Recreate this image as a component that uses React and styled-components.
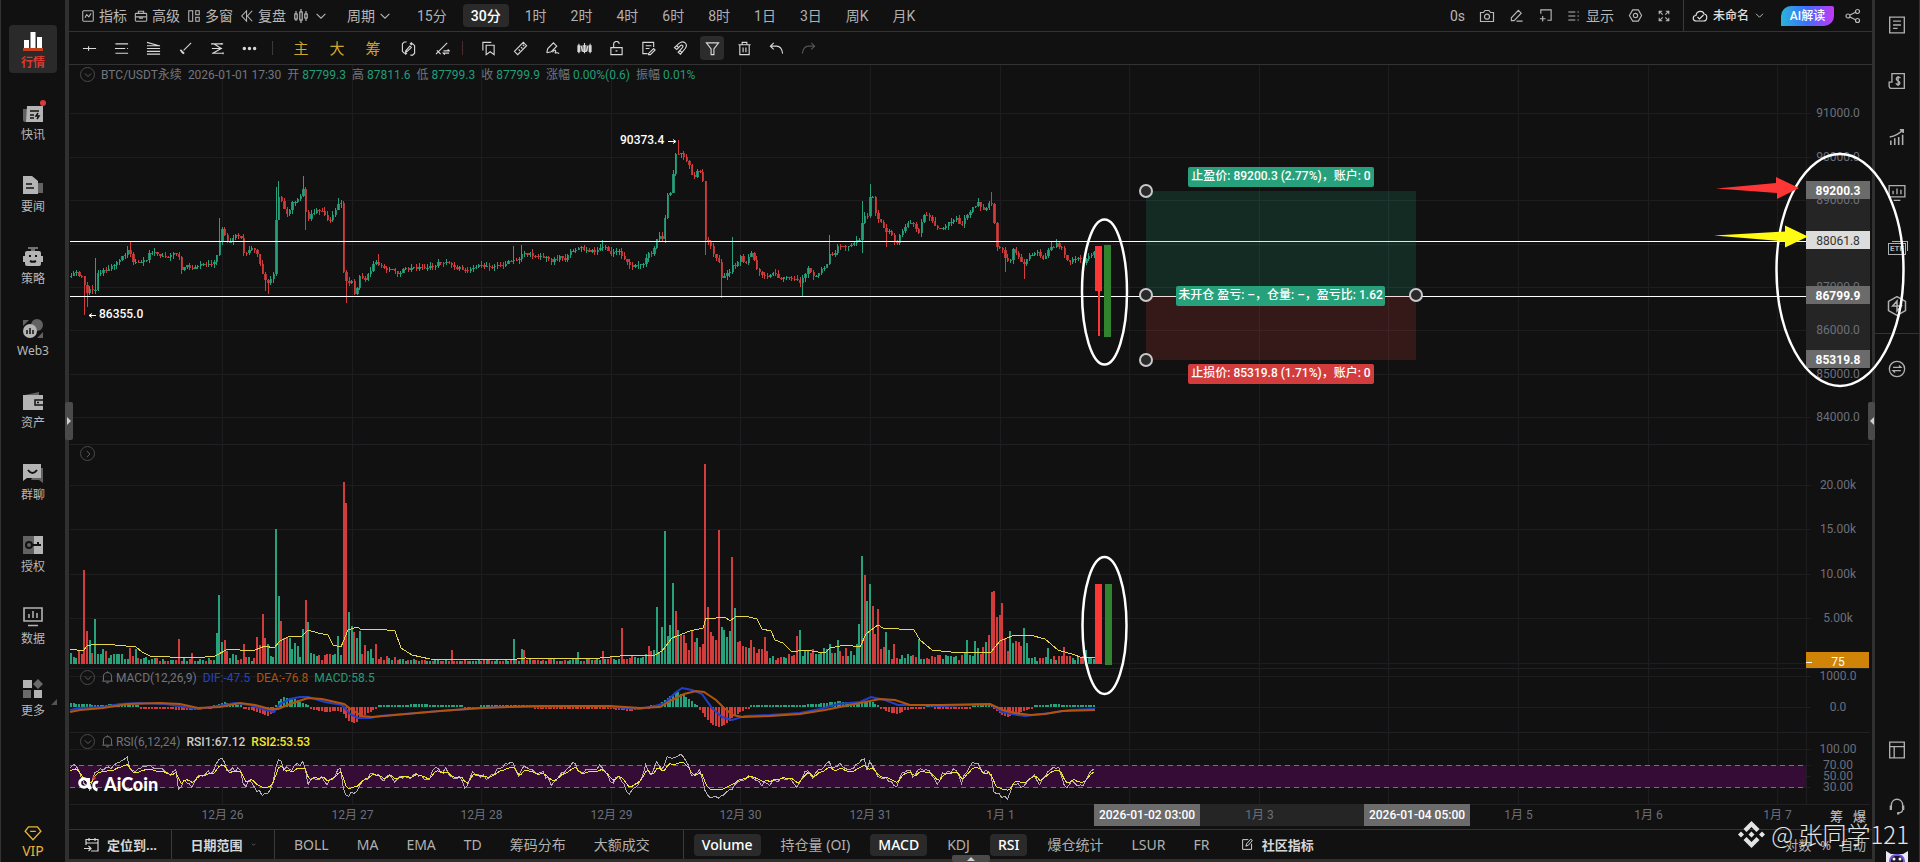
import React from 'react';
import styled, { createGlobalStyle } from 'styled-components';

/**
 * Icons, drawn on a 16px grid
 */

const paths = {
  stats: <><rect x="2" y="2" width="12" height="12" rx="1" /><path d="M4.5 10l2-3.5 2.500 2.500 2.500-4" /></>,
  bag: <><rect x="1.5" y="5" width="13" height="9" rx="1" /><path d="M5 5V2.5h6V5M1.5 9h13M6.5 9v1.5h3V9" /></>,
  windows: <><rect x="2" y="2" width="4.5" height="12" /><rect x="10" y="2" width="4" height="4.5" /><rect x="10" y="9.5" width="4" height="4.5" /></>,
  rewind: <path d="M7.5 2L2 8l5.5 6zM14 2L8.5 8l5.5 6" />,
  candles: <><path d="M3 3v10M8 1v14M13 3v10" /><rect x="1.8" y="6" width="2.4" height="5" fill="#111" /><rect x="6.8" y="4" width="2.4" height="8" fill="#111" /><rect x="11.8" y="6" width="2.4" height="4" fill="#111" /></>,
  down: <path d="M3 5.5l5 5 5-5" />,
  right: <path d="M6 3l5 5-5 5" />,
  camera: <><path d="M1.5 4.5h3l1.5-2h4l1.5 2h3v9h-13z" /><circle cx="8" cy="8.7" r="2.5" /></>,
  pencil: <path d="M2.5 13.5v-3l7.5-8 3 3-7.5 8zM8 14h6.5" />,
  addBox: <path d="M3 6V2h11v11h-4M2 11.5h6M5 8.5v6" />,
  list: <><path d="M1.5 3.5h8M1.5 8h8M1.5 12.5h8" /><path d="M12 3.5h2M12 8h2M12 12.5h2" strokeDasharray="1.5 1" /></>,
  hexagon: <><path d="M5 2h6l3.5 6L11 14H5L1.5 8z" /><circle cx="8" cy="8" r="2.3" /></>,
  expand: <path d="M2.5 6V2.5H6M2.5 2.5l4 4M10 2.5h3.5V6M13.5 2.5l-4 4M2.5 10v3.5H6M2.5 13.5l4-4M13.5 10v3.5H10M13.5 13.5l-4-4" />,
  cloud: <><path d="M4.5 13C0 13 .5 7.5 4 7.5c.5-5 7-5.5 8-1.5 4 .5 3.5 7-.5 7z" /><path d="M5.5 9l2 2 4-4" /></>,
  share: <><circle cx="3" cy="8" r="2" /><circle cx="12.5" cy="3.5" r="2" /><circle cx="12.5" cy="12.5" r="2" /><path d="M5 7l5.5-2.7M5 9l5.5 2.7" /></>,
  cross: <path d="M1 8h14M7 5.5v5" />,
  lines: <path d="M2 3h13M1 8h11M2 13h13M1 3h.5M14 8h1M1 13h.5" />,
  fan: <path d="M1 1.5l13 3.5M1 5h14M1 8h14M1 11h14M1 14h14" />,
  brush: <><path d="M14 2L6 10" /><path d="M2.5 9.5l4 4M4 11.5l1.5 1.5" strokeWidth="1.8" /></>,
  pattern: <path d="M2 3h12M2 8h11M2 13h12M4 3l8 5M12 8l-9 5M2 2v2M14 12v2M12 2v2" />,
  dots: <><circle cx="2.5" cy="8" r="1.2" fill="currentColor" /><circle cx="8" cy="8" r="1.2" fill="currentColor" /><circle cx="13.5" cy="8" r="1.2" fill="currentColor" /></>,
  cycle: <><path d="M6 1H3.5L1.5 3v8l2 2H6M4.5 14.5L6 13l-1.5-1.5M10 3h2.5l2 2v8l-2 2H10M11.5 1.5L10 3l1.5 1.5" /><path d="M5 10.5l4.5-5L11 7l-4.500 4H5z" /></>,
  lineSwap: <><path d="M1 14L13 2M2 10l4 4" /><path d="M9 10.5h6l-1.5-1.5M15 13H9l1.5 1.5" strokeWidth="1.4" /></>,
  bookmark: <><path d="M5.5 4.5H14v10l-4.2-3-4.3 3z" /><path d="M2 10V1.5h9" /></>,
  ruler: <path d="M1.5 11L11 1.5 14.5 5 5 14.5zM6 9l1.5 1.5M8.5 6.5L10 8M10.5 4L12 5.500" />,
  penWave: <path d="M2 12l1-4 6-6 3.5 3.5-6 6-4 1zM8 12c3-4 4-2 3 0s2-1 4 1.5" />,
  candleRow: <path d="M2 3v10M8 2v11M14 3v10M1 5h2v6H1zM6.5 5h3v6h-3zM13 5h2v6h-2zM4.5 5l1 6M11.5 5l-1 6" />,
  lock: <path d="M2 7h12v7.5H2zM5 7V4a3 3 0 0 1 6-1M7 10.5h2" />,
  note: <path d="M13.5 6.5v-5H2v12h5M5 5h6M5 8h4M8 13.5L13.5 8 15 9.5l-5 5H8z" />,
  magnet: <path d="M1.500 7l5-4.500c5-4 10 1 6.500 5.500L8 14l-2.500-2 4.500-5c1.500-2-.5-3.500-2-2L4 9zM4 5l2.500 2.500M7 10l2.500 2" />,
  filter: <path d="M1.5 2h13l-5 6.500v6h-3v-6z" />,
  trash: <path d="M3 4v10.5h10V4M1.5 4h13M5.5 4V1.5h5V4M6.5 7v5M9.5 7v5" />,
  undo: <path d="M5 2L1.5 5.5 5 9M2 5.5h6c4 0 6 3.5 6.5 8" />,
  redo: <path d="M11 2l3.5 3.5L11 9M14 5.5H8c-4 0-6 3.500-6.500 8" />,
  bell: <path d="M1.5 12.5h13M3 12V7a5 5 0 0 1 10 0v5M6.5 14.5h3M8 2V.5" />,
  calendar: <path d="M3 8V2.5h12V14H8M3 6h12M6 1v3M12 1v3M1 11.5h7M5.5 9L8 11.500 5.500 14" />,
  editBox: <path d="M9 2H2v12h11V7M6 10l1-3 5-5.5L14 3l-5 6z" />,
  doc: <path d="M1.5 1h13v14h-13zM4.5 4.5h7M4.5 8h7M4.5 11h4" />,
  bill: <><path d="M3.5 1.5h11v13H3a2 2 0 0 1-2-2V9h2.5z" /><path d="M11 5.5C10 4 7 4.500 7.500 6.500S11 8 10.500 10 7.500 11.500 7 10M9 3.5v9" /></>,
  growth: <path d="M2.5 15v-4M6 15V9M9.5 15V8M13 15V6M1.5 8C7 7 10 5 13.500 1.500M10.500 1.500h3v3" strokeWidth="1.4" />,
  board: <path d="M1 1.5h14v10H1zM4.5 9V6M8 9V4M11.5 9V5M5 14.5h6" />,
  hexTrade: <path d="M8 .5l6.800 3.800v7.400L8 15.500l-6.800-3.800V4.300zM8 4L4.500 8H8v4l3.500-4H8z" />,
  swap: <><circle cx="8" cy="8" r="6.8" /><path d="M4.5 6.5h7L9.800 4.800M11.500 9.500h-7l1.700 1.700" /></>,
  layout: <path d="M1.5 1h13v14h-13zM1.5 5h13M5.5 5v10" />,
  headset: <><path d="M3 10V7a5 5 0 0 1 10 0v3M13 11c0 2-2 3-4 3" /><path d="M2.5 7.5v4M13.5 7.5v4M8 14.5h2" strokeWidth="2" /></>,
  diamond: <path d="M4 2.5h8l3 4L8 14 1 6.500zM5.500 6.500h5" />
};

const Svg = styled.svg`
  flex: none;
  display: block;
  width: ${p => p.$size || 16}px;
  height: ${p => p.$size || 16}px;
  fill: none;
  stroke: currentColor;
`;

const Icon = ({ name, size, stroke = 1.2 }) => (
  <Svg viewBox="0 0 16 16" $size={size} strokeWidth={stroke} aria-hidden="true">
    {paths[name]}
  </Svg>
);

const menuIcons = {
  行情: <path d="M1 9h5v8H1zM7.5 1h5v16h-5zM14 6h5v11h-5z" />,
  快讯: <><path d="M0 6h4v13H2a2 2 0 0 1-2-2z" opacity=".5" /><path d="M4 3h16v16H3z" /><path d="M7 8h9M7 12h4M7 15h4M15 10l-2 3h3l-2 3" stroke="#111" strokeWidth="1.5" fill="none" /></>,
  要闻: <><path d="M13 8h7v10h-7z" opacity=".5" /><path d="M0 1h9l6 5v13H0z" /><path d="M3 9h6M3 13h8" stroke="#111" strokeWidth="1.5" /></>,
  策略: <><path d="M5 0h10v2h-3v2H8V2H5z" opacity=".6" /><rect x="2" y="4" width="16" height="15" rx="2" /><path d="M0 9h3v6H0zM17 9h3v6h-3z" /><path d="M6 9h2M12 9h2M7 14c2 1 4 1 6 0" stroke="#111" strokeWidth="2" fill="none" /></>,
  Web3: <><path d="M0 1h6L0 7zM20 13v6h-6z" opacity=".5" /><circle cx="14" cy="6" r="6" opacity=".5" /><circle cx="7" cy="12" r="7" /><path d="M4 15v-4M7 15V9M10 15v-4" stroke="#111" strokeWidth="1.5" /></>,
  资产: <><path d="M2 4l14-3v4H2z" opacity=".5" /><path d="M0 4h20v15H0z" /><path d="M20 9h-8v5h8M14 11.5h2" stroke="#111" strokeWidth="1.5" fill="none" /></>,
  群聊: <><path d="M14 5h6v15l-4-3H8z" opacity=".5" /><path d="M0 1h18v14H4l-4 3z" /><path d="M5 7c3 4 6 4 9 0" stroke="#111" strokeWidth="2" fill="none" /></>,
  授权: <><path d="M0 1h11v18H0z" opacity=".5" /><path d="M11 1h9v18h-9z" /><circle cx="6" cy="10" r="3" fill="none" stroke="#111" strokeWidth="2" /><path d="M9 10h9M15 10V7" stroke="#111" strokeWidth="2" /></>,
  数据: <><path d="M1 1h18v13H1z" fill="none" stroke="currentColor" strokeWidth="1.6" /><path d="M6 11V7M10 11V4M14 11V6M5 18.5h10" stroke="currentColor" strokeWidth="1.5" /></>,
  更多: <><path d="M0 1h9v8H0zM11 11h8v8h-8z" /><path d="M15 0l5 5-5 5-5-5zM0 11h8v8H0z" opacity=".55" /></>
};

/**
 * Layout
 */

const GlobalStyle = createGlobalStyle`
  * { box-sizing: border-box; }
  body {
    margin: 0;
    background: #111;
    color: #b8b8b8;
    font: 14px/20px Roboto, "Noto Sans CJK SC", sans-serif;
  }
  button { font: inherit; color: inherit; background: none; border: 0; padding: 0; margin: 0; }
`;

const Page = styled.div`
  position: relative;
  display: grid;
  grid-template-columns: 69px minmax(0, 1fr) 48px;
  height: 100vh;
  overflow: hidden;
`;

const SideBar = styled.nav`
  display: flex;
  flex-direction: column;
  align-items: center;
  gap: 24px;
  padding-top: 25px;
  border-left: 1px solid #333;
  border-right: 4px solid #303030;
  overflow: hidden;
`;

const MenuButton = styled.button`
  flex: none;
  position: relative;
  display: flex;
  flex-direction: column;
  align-items: center;
  width: 48px;
  height: 48px;
  padding-top: 6px;
  gap: 3px;
  border-radius: 4px;
  font: ${p => (p.$active ? 700 : 400)} 12px/18px "Noto Sans", "Noto Sans CJK SC", sans-serif;
  color: ${p => (p.$active ? '#d63a31' : '#b8b8b8')};
  background: ${p => (p.$active ? '#2a2a2a' : 'transparent')};
  svg { flex: none; color: ${p => (p.$active ? '#fff' : '#b4b4b4')}; fill: currentColor; }
`;

const RedDot = styled.span`
  position: absolute;
  top: 3px;
  right: 11px;
  width: 6px;
  height: 6px;
  border-radius: 50%;
  background: #d63a3a;
`;

const Corner = styled.span`
  position: absolute;
  right: 0;
  bottom: 16px;
  border: 3px solid transparent;
  border-right-color: #555;
  border-bottom-color: #555;
`;

const VipButton = styled(MenuButton)`
  height: 42px;
  margin-top: auto;
  padding-top: 4px;
  gap: 0;
  color: #e3b53a;
  font-size: 14px;
  svg { color: #e3b53a; fill: none; }
`;

const Main = styled.main`
  display: flex;
  flex-direction: column;
  min-width: 0;
  border-bottom: 3px solid #303030;
`;

const TopBar = styled.header`
  flex: none;
  display: flex;
  align-items: center;
  height: 32px;
  padding: 0 11px 0 12px;
  border-bottom: 1px solid #333;
  white-space: nowrap;
`;

const Group = styled.div`
  display: flex;
  align-items: center;
  gap: ${p => p.$gap || 8}px;
  margin-left: ${p => (p.$end ? 'auto' : `${p.$before || 0}px`)};
`;

const TextButton = styled.button`
  display: flex;
  align-items: center;
  gap: ${p => p.$gap || 5}px;
`;

const Tab = styled.button`
  height: ${p => p.$height || 23}px;
  padding: 0 8px;
  border-radius: 4px;
  color: ${p => (p.$active ? '#fff' : '#b0b0b0')};
  font-weight: ${p => (p.$active ? 500 : 400)};
  background: ${p => (p.$active ? '#2a2a2a' : 'transparent')};
`;

const Divider = styled.span`
  flex: none;
  width: 1px;
  height: ${p => p.$height}px;
  margin: 0 ${p => p.$after || 0}px 0 ${p => p.$before || 0}px;
  background: ${p => p.$color || '#3a3a3a'};
`;

const NameButton = styled(TextButton)`
  font-size: 12px;
  font-weight: 500;
  color: #e0e0e0;
`;

const AiButton = styled.button`
  width: 53px;
  height: 20px;
  margin-left: 5px;
  border-radius: 10px 2px 10px 0;
  font: 500 12px/20px Roboto, "Noto Sans CJK SC", sans-serif;
  color: #fff;
  background: linear-gradient(90deg, #29b5d8, #3f6dff 50%, #c438f3);
`;

const DrawBar = styled.div`
  flex: none;
  display: flex;
  align-items: center;
  height: 33px;
  padding-left: 4px;
  border-bottom: 1px solid #333;
  color: #d8d8d8;
`;

const ToolBox = styled.div`
  width: ${p => p.$width || 32}px;
  display: flex;
  justify-content: center;
`;

const ToolButton = styled.button`
  display: grid;
  place-items: center;
  width: 24px;
  height: 24px;
  border-radius: 4px;
  color: ${p => p.$color || 'inherit'};
  font-size: 16px;
  background: ${p => (p.$active ? '#2c2c2c' : 'transparent')};
`;

const MarkButton = styled(ToolButton)`
  padding-top: 2px;
  font-size: 15px;
`;

const ChartArea = styled.section`
  position: relative;
  flex: 1;
  min-height: 0;
`;

const ChartSvg = styled.svg`
  display: block;
  width: 100%;
  height: 100%;
  font: 12px Roboto, "Noto Sans CJK SC", sans-serif;
`;

const Legends = styled.div`
  position: absolute;
  inset: 0;
  display: grid;
  grid-template-rows: 379fr 224fr 64fr 97fr;
`;

const Legend = styled.div`
  display: flex;
  align-items: center;
  gap: 6px;
  height: 19px;
  padding-left: 11px;
  font-size: 12px;
  color: #72757d;
  white-space: nowrap;
`;

const Fold = styled.button`
  display: grid;
  place-items: center;
  width: 15px;
  height: 15px;
  border: 1px solid #4a4a4a;
  border-radius: 50%;
  color: #777;
`;

const Value = styled.span`
  color: ${p => p.$color || '#239d78'};
  font-weight: ${p => (p.$strong ? 500 : 400)};
`;

const Named = styled.span`
  display: flex;
  align-items: center;
  gap: 2px;
`;

const AxisTools = styled.div`
  position: absolute;
  right: 6px;
  bottom: 2px;
  display: flex;
  gap: 10px;
  font-size: 13px;
  font-weight: 500;
`;

const Brand = styled.div`
  position: absolute;
  left: 9px;
  bottom: 35px;
  display: flex;
  align-items: center;
  gap: 5px;
  color: #fff;
  font: 900 18px/20px Lato, sans-serif;
`;

const BottomBar = styled.footer`
  flex: none;
  display: flex;
  align-items: center;
  height: 30px;
  padding-right: 6px;
  border-top: 1px solid #333;
  font-family: "Noto Sans", "Noto Sans CJK SC", sans-serif;
  white-space: nowrap;
`;

const RangeButton = styled.button`
  display: flex;
  align-items: center;
  justify-content: center;
  gap: 8px;
  width: ${p => p.$width}px;
  font-size: 13px;
  font-weight: 700;
  color: #d6d6d6;
`;

const AxisMode = styled.div`
  display: flex;
  gap: 9px;
  margin-left: auto;
  font-size: 13px;
`;

const RightBar = styled.aside`
  display: flex;
  flex-direction: column;
  justify-content: space-between;
  border-left: 3px solid #303030;
  border-right: 1px solid #333;
  color: #b0b0b0;
  overflow: hidden;
`;

const Rail = styled.div`
  flex: none;
  display: flex;
  flex-direction: column;
  align-items: center;
  gap: 38px;
  padding-top: ${p => p.$top || 0}px;
`;

const RailButton = styled.button`
  flex: none;
  display: grid;
  place-items: center;
  width: 20px;
  height: 18px;
`;

const EtfBadge = styled.span`
  border: 1px solid #b0b0b0;
  box-shadow: 2px -2px 0 -1px #111, 3px -3px 0 -1px #b0b0b0;
  padding: 0 1px;
  font-size: 8px;
  line-height: 10px;
  font-weight: 700;
`;

const RailLine = styled.hr`
  flex: none;
  width: 100%;
  height: 1px;
  margin: -19px 0 -12px;
  border: 0;
  background: #333;
`;

const Avatar = styled.svg`
  flex: none;
  width: 24px;
  height: 12px;
  margin-top: -3px;
`;

const handlePlaces = {
  left: 'left: 65px; top: 402px; width: 8px; height: 38px;',
  right: 'right: 45px; top: 402px; width: 7px; height: 38px;',
  bottom: 'left: 952px; bottom: 0; width: 38px; height: 7px;'
};

const Handle = styled.button`
  position: absolute;
  z-index: 1;
  display: grid;
  place-items: center;
  color: #d0d0d0;
  background: #4a4a4a;
  border-radius: 2px;
  ${p => handlePlaces[p.$side]}
`;

const Marks = styled.svg`
  position: absolute;
  inset: 0;
  width: 100%;
  height: 100%;
  pointer-events: none;
`;

const Signature = styled.div`
  position: absolute;
  right: 11px;
  bottom: 10px;
  display: flex;
  align-items: center;
  gap: 6px;
  font: 300 24px/36px "Noto Sans CJK SC", sans-serif;
  color: #e4e4e4;
  pointer-events: none;
`;

/**
 * Chart data: key points, filled in to one candle every half hour
 */

const GREEN = '#26a17b';
const RED = '#d23c3c';
const STEP = 2.7;
const COUNT = 380;

const priceKeys = [70,278,74,270,78,276,82,277,85,289,88,295,90,288,92,291,95,290,97,272,102,272,108,268,114,264,120,259,126,252,129,246,131,262,137,263,146,261,149,253,153,250,158,256,166,257,172,253,178,253,180,269,186,266,193,268,200,265,208,265,214,262,218,250,219,240,222,228,225,238,228,245,232,240,237,234,241,240,244,258,250,248,256,252,260,266,264,280,268,285,272,276,275,270,276,200,280,194,282,208,288,215,291,204,296,202,301,195,304,184,306,225,310,213,316,211,322,210,328,221,334,214,338,204,342,203,343,270,347,287,351,280,354,293,356,296,358,275,365,279,370,271,374,263,380,266,388,270,392,267,396,274,402,270,420,267,432,267,440,262,450,263,456,268,468,270,476,266,500,266,510,261,518,260,522,252,526,254,540,256,552,261,560,256,565,259,572,250,580,248,590,252,600,248,603,246,611,254,618,250,626,262,632,266,642,265,648,252,650,258,654,246,659,234,661,245,664,225,666,196,670,194,672,181,674,154,679,154,682,155,686,160,690,168,693,179,698,168,702,180,704,190,705,240,710,245,714,256,719,262,721,277,726,275,730,272,733,262,736,268,739,253,744,265,748,258,751,252,755,266,762,274,768,279,772,272,778,278,784,276,790,280,796,278,799,284,803,278,808,268,814,278,820,270,826,268,828,255,834,255,838,244,846,248,850,246,856,240,860,238,863,208,866,225,870,193,872,196,875,213,879,220,884,230,890,232,896,246,900,234,906,224,912,222,918,234,922,216,930,216,935,226,942,229,948,223,956,217,960,226,966,215,972,208,978,202,984,211,988,202,992,204,994,225,996,246,1002,250,1006,262,1010,262,1012,247,1018,257,1024,265,1028,256,1036,251,1042,260,1048,250,1056,244,1062,250,1068,262,1076,257,1084,262,1090,254,1096,251];
const wickKeys = [85,315,87,307,96,258,129,242,219,218,264,291,268,294,276,187,279,181,303,176,306,230,338,198,346,303,377,254,514,246,522,245,603,240,679,140,706,255,720,298,733,237,801,296,828,235,861,253,870,184,862,201,887,247,990,192,1004,272,1024,279,1050,242];

const volumeKeys = [70,10,90,14,110,10,125,8,135,12,145,6,170,4,215,5,225,12,240,6,255,6,262,20,275,12,290,22,300,12,320,8,330,9,345,12,360,20,370,10,385,6,400,6,420,3,500,4,560,4,590,5,620,6,650,10,665,20,690,20,705,20,725,24,745,16,765,12,775,4,800,12,830,14,850,14,875,25,885,12,900,8,930,8,960,8,980,14,1000,30,1020,16,1035,6,1060,7,1096,7];
// negative height: a falling half hour
const volumeSpikes = [85,-94,87.5,-33,90,24,95.5,45,103,15,130,-16,179,-25,192,-11,217,31,220,69,223,22,225,-24,244,-20,257.5,-27,263,-50,266,-26,268.5,20,276.5,135,279,68,282,-43,284.5,-26,287,-26,290,26,298.5,18,303.5,35,306,-64,309,42,338.5,28,344,-182,347,-161,349,52,352,38,355,-32,357,26,360,33,371,15,376,-20,452,-14,514,25,522.5,15,525,-14,578,12,603,-13,622,-36,647,14,649,-18,657.5,57,663,37,665.5,133,668,28,671,39,673.5,81,676,-53,679,34,682,-29,684.5,-29,692.5,-33,698,26,706,-200,709,-57,711.5,-32,714,-28,717,-24,719.5,-134,722,37,725,34,727.5,27,730,33,733,-107,736,56,738.5,-22,741,-23,752,-24,765,-27,798,-28,800.5,34,828,85,830.5,20,838.5,24,860,40,862.5,108,865,-89,868,63,871,80,873.5,-58,876,-30,879,-55,887,32,895,-20,919,25,968,24,976,23,989,-29,992,-72,995,-73,997.5,-47,1000,-49,1003,-61,1006,-26,1011,33,1024.5,36,1027,21,1049,16,1065,-17,1086,14];
const volumeMa = [70,649,83,651,87,646,95,644,115,645,136,647,142,652,150,656,170,657,195,658,215,656,228,649,240,650,255,650,265,646,274,648,280,641,290,636,302,636,308,630,318,633,328,635,333,645,341,647,348,630,357,627,362,630,378,629,395,631,401,648,412,655,430,659,510,660,525,658,575,659,600,658,620,656,655,655,662,651,672,638,690,631,703,628,706,618,716,618,725,617,730,621,735,617,745,616,757,619,762,629,771,631,775,640,783,643,792,652,805,650,825,653,830,648,845,645,860,647,866,634,878,625,883,628,914,630,920,640,932,650,960,653,991,652,1000,641,1012,636,1030,635,1045,639,1058,650,1075,655,1080,657,1095,657];

const deaKeys = [70,712,80,710,103,708,128,704,160,703,180,704,198,708,220,707,240,703,255,705,270,709,278,709,290,704,302,700,308,698,322,699,344,704,352,710,362,716,372,717,395,715,440,711,480,708,540,706,575,706,610,706,640,708,660,707,672,700,684,694,696,691,704,692,716,700,724,708,733,715,742,717,770,716,800,714,825,710,845,706,865,702,880,699,895,700,910,705,940,705,990,704,1003,710,1015,713,1030,715,1045,714,1062,711,1095,710];
const difKeys = [70,710,80,708,103,707,120,704,140,703,165,704,198,709,218,706,235,703,250,705,262,709,274,712,280,704,290,699,300,697,308,697,325,702,342,705,350,714,358,718,370,718,380,716,440,711,500,707,575,706,600,706,640,709,655,706,665,703,675,693,682,688,692,690,702,694,712,708,722,717,732,720,745,716,770,715,800,713,820,709,838,704,860,702,871,697,885,700,898,705,920,705,940,706,990,704,1002,712,1012,714,1025,716,1050,713,1070,710,1095,709];
const histKeys = [70,4,80,3,100,2,115,3,135,2,140,-1,160,-1,180,-3,198,-3,212,-1,216,2,224,5,240,2,244,-2,255,-4,262,-7,268,-9,274,-5,277,5,283,10,295,8,305,3,310,0,314,-3,325,-5,338,-4,342,-5,348,-14,355,-16,365,-8,374,-2,378,2,400,2,418,3,440,2,455,1,470,-1,490,1,520,2,545,-2,570,-1,600,-1,630,-4,645,-1,660,3,668,10,678,15,686,10,696,2,702,-6,712,-18,720,-20,728,-15,738,-6,748,-1,752,2,800,2,825,4,838,6,850,4,870,6,876,3,880,0,886,-4,896,-7,906,-3,920,-1,930,1,940,-2,955,-2,970,0,985,3,992,0,1000,-7,1008,-10,1018,-6,1028,-2,1034,1,1055,3,1080,1,1095,2];
const rsiKeys = [70,768,74,761,78,771,82,778,86,786,90,790,94,775,98,772,104,768,110,767,118,764,128,759,131,772,136,774,140,768,150,766,158,771,164,770,168,775,176,772,179,791,184,782,192,788,196,778,206,772,212,774,217,760,223,755,226,774,232,769,240,770,244,787,250,780,256,788,262,795,268,796,274,780,277,759,279,757,284,768,292,768,300,765,304,761,307,783,314,778,322,779,328,784,336,773,341,768,344,793,350,795,356,791,360,783,370,776,378,774,384,779,388,775,394,780,402,778,410,778,415,772,422,778,430,778,434,766,440,772,446,768,452,778,458,777,466,788,472,773,480,777,490,777,496,771,504,766,514,761,518,780,523,762,528,770,534,771,544,773,552,785,560,775,568,768,575,763,580,773,588,768,594,771,600,766,606,772,612,784,617,776,624,785,628,793,634,788,640,782,647,763,650,775,657,761,661,772,667,759,674,755,682,757,688,762,692,778,700,770,704,786,706,795,712,797,720,799,728,792,736,783,742,782,750,774,758,782,766,785,774,782,782,778,790,780,798,786,806,770,814,777,822,767,829,759,833,769,840,764,848,769,856,765,861,760,863,753,866,769,871,760,877,774,884,778,890,780,896,788,902,774,909,768,914,778,918,770,926,768,932,776,938,784,944,772,950,773,957,768,961,782,968,768,976,760,982,772,990,769,993,794,1004,797,1009,797,1012,783,1018,785,1022,790,1028,782,1034,774,1040,784,1048,771,1054,767,1060,770,1066,789,1073,781,1082,787,1088,774,1095,767];

const noise = i => {
  const n = Math.sin(i * 12.9898) * 43758.5453;
  return n - Math.floor(n);
};

const at = (keys, x) => {
  for (let k = 2; k < keys.length; k += 2) {
    if (x <= keys[k]) {
      const t = (x - keys[k - 2]) / (keys[k] - keys[k - 2]);
      return keys[k - 1] + (keys[k + 1] - keys[k - 1]) * Math.max(0, t);
    }
  }
  return keys[keys.length - 1];
};

const indexOf = x => Math.round((x - 70.5) / STEP);
const pairs = keys => keys.filter((_, i) => i % 2 === 0).map((x, i) => [x, keys[i * 2 + 1]]);
const toPoints = keys => pairs(keys).map(p => p.join(',')).join(' ');

const candles = Array.from({ length: COUNT }, (_, i) => {
  const x = 70.5 + i * STEP;
  const close = at(priceKeys, x) + (noise(i) - 0.5) * 3;
  const open = at(priceKeys, x - STEP) + (noise(i - 1) - 0.5) * 3;
  return {
    x,
    up: close <= open,
    top: Math.min(open, close),
    bottom: Math.max(open, close),
    high: Math.min(open, close) - noise(i + 500) * 4,
    low: Math.max(open, close) + noise(i + 900) * 4,
    volume: Math.max(3, at(volumeKeys, x) * (0.5 + noise(i + 77) * 0.8)),
    hist: at(histKeys, x)
  };
});
candles.forEach(c => { c.volumeUp = c.up; });

pairs(wickKeys).forEach(([x, y]) => {
  const c = candles[indexOf(x)];
  c.high = Math.min(c.high, y);
  c.low = Math.max(c.low, y);
});
pairs(volumeSpikes).forEach(([x, h]) => {
  const c = candles[indexOf(x)];
  c.volume = Math.abs(h);
  c.volumeUp = h > 0;
});

const rsiFast = candles.map((c, i) => at(rsiKeys, c.x) + (noise(i + 40) - 0.5) * 5);
const rsiSlow = rsiFast.map((y, i) => 776 + ((y + rsiFast[Math.max(0, i - 1)]) / 2 - 776) * 0.65);
const series = values => values.map((y, i) => `${candles[i].x},${y.toFixed(1)}`).join(' ');

const days = ['12月 26', '12月 27', '12月 28', '12月 29', '12月 30', '12月 31', '1月 1', '', '1月 3', '', '1月 5', '1月 6', '1月 7'];
const dayX = i => Math.round(222 + i * 129.6) + 0.5;

const axisRows = [
  ['91000.0', 113], ['90000.0', 157], ['89000.0', 200], ['', 244], ['87000.0', 287], ['86000.0', 330], ['85000.0', 374], ['84000.0', 417],
  ['20.00k', 485], ['15.00k', 529], ['10.00k', 574], ['5.00k', 618], ['', 663],
  ['1000.0', 676], ['0.0', 707], ['100.00', 749], ['70.00', 765], ['50.00', 776], ['30.00', 787]
];
const priceTags = [['89200.3', 181, '#6b6b6b', '#fff'], ['88061.8', 231, '#dcdcdc', '#333'], ['86799.9', 286, '#6b6b6b', '#fff'], ['85319.8', 350, '#6b6b6b', '#fff']];
const positionTags = [
  [1188, 167, 186, GREEN, '止盈价: 89200.3 (2.77%)，账户: 0'],
  [1176, 286, 209, GREEN, '未开仓 盈亏: –，仓量: –，盈亏比: 1.62'],
  [1188, 364, 186, RED, '止损价: 85319.8 (1.71%)，账户: 0']
];

/**
 * Components
 */

const Chart = () => (
  <ChartSvg viewBox="69 65 1803 764">
    <g stroke="#1d1d20">
      {days.map((_, i) => <path key={i} d={`M${dayX(i)} 65V804`} />)}
      {axisRows.map(([, y]) => <path key={y} d={`M70 ${y + 0.5}H1811`} />)}
      <path d="M1806.5 65V804" />
      {[444, 668, 732, 804].map(y => <path key={y} d={`M70 ${y + 0.5}H1870`} stroke="#202024" />)}
    </g>
    <rect x="70" y="766" width="1736" height="21" fill="#350c36" />
    <path d="M70 765.5H1806M70 787.5H1806" stroke="#77707a" strokeDasharray="5 4" />

    <g shapeRendering="crispEdges">
      {candles.map(c => (
        <g key={c.x} fill={c.up ? GREEN : RED}>
          <rect x={c.x} y={c.high} width="1" height={c.low - c.high} />
          <rect x={c.x - 0.5} y={c.top} width="2.4" height={Math.max(1, c.bottom - c.top)} opacity=".85" />
          <rect x={c.x - 0.7} y={664 - c.volume} width="2" height={c.volume} fill={c.volumeUp ? GREEN : RED} />
          <rect
            x={c.x - 0.7}
            y={c.hist > 0 ? 707 - Math.max(2, c.hist) : 707}
            width="2"
            height={Math.max(1.5, Math.abs(c.hist))}
            fill={c.hist > 0 ? GREEN : RED}
          />
        </g>
      ))}
    </g>

    <g fill="none">
      <polyline points={toPoints(volumeMa)} stroke="#e6d84e" shapeRendering="crispEdges" />
      <polyline points={toPoints(difKeys)} stroke="#2040c8" strokeWidth="2" />
      <polyline points={toPoints(deaKeys)} stroke="#b4540c" strokeWidth="2" />
      <polyline points={series(rsiFast)} stroke="#b2adb4" shapeRendering="crispEdges" />
      <polyline points={series(rsiSlow)} stroke="#f0e822" shapeRendering="crispEdges" />
    </g>

    <path d="M70 241.5H1806M70 296.5H1806" stroke="#fff" />
    <rect x="1146" y="191" width="270" height="105" fill={GREEN} fillOpacity=".19" />
    <rect x="1146" y="296" width="270" height="64" fill={RED} fillOpacity=".19" />
    {[[1146, 191], [1146, 295], [1416, 295], [1146, 360]].map(([cx, cy]) => (
      <circle key={`${cx}-${cy}`} cx={cx} cy={cy} r="6" fill="#2a2a2a" stroke="#c8c8cc" strokeWidth="2" />
    ))}
    {positionTags.map(([x, y, w, fill, text]) => (
      <g key={text}>
        <rect x={x} y={y} width={w} height="20" rx="2" fill={fill} />
        <text x={x + w / 2} y={y + 13} fill="#fff" fontWeight="500" textAnchor="middle">{text}</text>
      </g>
    ))}

    <g fill="#fff">
      <text x="620" y="144" fontWeight="500">90373.4</text>
      <text x="99" y="318" fontWeight="500">86355.0</text>
      <path d="M668 141.5h7M673 139.5l3 2-3 2M96 315.5h-7M92 313.5l-3 2 3 2" fill="none" stroke="#fff" />
    </g>

    <rect x="1806" y="181" width="64" height="187" fill="#252525" />
    <g fill="#6b6f7c" textAnchor="middle">
      {axisRows.map(([label, y]) => <text key={y} x="1838" y={y + 4}>{label}</text>)}
      {days.map((label, i) => i !== 8 && <text key={i} x={dayX(i)} y="819">{label}</text>)}
    </g>
    {priceTags.map(([label, y, fill, color]) => (
      <g key={label}>
        <rect x="1806" y={y} width="64" height="18" fill={fill} />
        <text x="1838" y={y + 14} fill={color} fontWeight={color === '#fff' ? 700 : 400} textAnchor="middle">{label}</text>
      </g>
    ))}
    <rect x="1806" y="652" width="63" height="16" fill="#cf8307" />
    <path d="M1806 662.5h6" stroke="#fff" />
    <text x="1838" y="666" fill="#fff" textAnchor="middle">75</text>

    <rect x="1094" y="804" width="376" height="22" fill="#252525" />
    <text x={dayX(8)} y="819" fill="#6b6f7c" textAnchor="middle">1月 3</text>
    {[[1094, '2026-01-02 03:00'], [1364, '2026-01-04 05:00']].map(([x, label]) => (
      <g key={x}>
        <rect x={x} y="804" width="106" height="22" fill="#6b6b6b" />
        <text x={x + 53} y="819" fill="#fff" fontWeight="500" textAnchor="middle">{label}</text>
      </g>
    ))}
  </ChartSvg>
);

const quotes = [['开', '87799.3'], ['高', '87811.6'], ['低', '87799.3'], ['收', '87799.9'], ['涨幅', '0.00%(0.6)'], ['振幅', '0.01%']];

const IndicatorLegends = () => (
  <Legends>
    <Legend>
      <Fold aria-label="收起"><Icon name="down" size={10} /></Fold>
      <span>BTC/USDT永续</span>
      <span>2026-01-01 17:30</span>
      {quotes.map(([name, value]) => (
        <span key={name}>{name} <Value>{value}</Value></span>
      ))}
    </Legend>
    <Legend>
      <Fold aria-label="展开"><Icon name="right" size={10} /></Fold>
    </Legend>
    <Legend>
      <Fold aria-label="收起"><Icon name="down" size={10} /></Fold>
      <Named><Icon name="bell" size={13} />MACD(12,26,9)</Named>
      <Value $color="#2743c4">DIF:-47.5</Value>
      <Value $color="#b4540c">DEA:-76.8</Value>
      <Value>MACD:58.5</Value>
    </Legend>
    <Legend>
      <Fold aria-label="收起"><Icon name="down" size={10} /></Fold>
      <Named><Icon name="bell" size={13} />RSI(6,12,24)</Named>
      <Value $color="#ccc" $strong>RSI1:67.12</Value>
      <Value $color="#f5e92a" $strong>RSI2:53.53</Value>
    </Legend>
  </Legends>
);

const Tool = ({ name, width, active, color }) => (
  <ToolBox $width={width}>
    <ToolButton $active={active} $color={color} aria-label={name}>
      <Icon name={name} size={15} />
    </ToolButton>
  </ToolBox>
);

const App = () => (
  <Page>
    <GlobalStyle />
    <SideBar>
      {Object.keys(menuIcons).map((label, i) => (
        <MenuButton key={label} $active={i === 0}>
          <svg width="20" height="20" viewBox="0 0 20 20">
            {menuIcons[label]}
            {i === 0 && <path d="M0 17h20v3H0z" fill="#c2401c" />}
          </svg>
          {label}
          {i === 1 && <RedDot />}
          {i === 9 && <Corner />}
        </MenuButton>
      ))}
      <VipButton><Icon name="diamond" size={18} />VIP</VipButton>
    </SideBar>

    <Main>
      <TopBar>
        <Group $gap={7}>
          <TextButton $gap={4}><Icon name="stats" size={14} />指标</TextButton>
          <TextButton $gap={4}><Icon name="bag" size={14} />高级</TextButton>
          <TextButton $gap={4}><Icon name="windows" size={14} />多窗</TextButton>
          <TextButton $gap={4}><Icon name="rewind" size={14} />复盘</TextButton>
          <TextButton aria-label="K线"><Icon name="candles" /><Icon name="down" size={14} /></TextButton>
        </Group>
        <Group $before={19}>
          <TextButton $gap={3}>周期<Icon name="down" size={14} /></TextButton>
        </Group>
        <Group $before={17}>
          {['15分', '30分', '1时', '2时', '4时', '6时', '8时', '1日', '3日', '周K', '月K'].map(t => (
            <Tab key={t} $active={t === '30分'}>{t}</Tab>
          ))}
        </Group>
        <Group $end $gap={14}>
          <span>0s</span>
          <TextButton aria-label="截图"><Icon name="camera" /></TextButton>
          <TextButton aria-label="画线"><Icon name="pencil" size={15} /></TextButton>
          <TextButton aria-label="新增"><Icon name="addBox" size={15} /></TextButton>
          <TextButton><Icon name="list" size={14} />显示</TextButton>
          <TextButton aria-label="设置"><Icon name="hexagon" size={15} /></TextButton>
          <TextButton aria-label="全屏"><Icon name="expand" size={14} /></TextButton>
        </Group>
        <Divider $height={31} $before={12} $after={8} />
        <Group $gap={11}>
          <NameButton><Icon name="cloud" />未命名<Icon name="down" size={11} /></NameButton>
          <AiButton>AI解读</AiButton>
          <TextButton aria-label="分享"><Icon name="share" /></TextButton>
        </Group>
      </TopBar>

      <DrawBar>
        {['cross', 'lines', 'fan', 'brush', 'pattern', 'dots'].map(n => <Tool key={n} name={n} />)}
        <Divider $height={14} $before={7} $after={10} />
        {['主', '大', '筹'].map(t => (
          <ToolBox key={t} $width={36}><MarkButton $color="#cfa52c">{t}</MarkButton></ToolBox>
        ))}
        <Tool name="cycle" width={34} />
        <Tool name="lineSwap" width={34} />
        <Divider $height={14} $before={3} $after={9} $color="#4a2a2a" />
        {['bookmark', 'ruler', 'penWave', 'candleRow', 'lock', 'note', 'magnet', 'filter', 'trash', 'undo'].map(n => (
          <Tool key={n} name={n} active={n === 'filter'} />
        ))}
        <Tool name="redo" color="#555" />
      </DrawBar>

      <ChartArea>
        <Chart />
        <IndicatorLegends />
        <Brand>
          <svg width="21" height="16" viewBox="0 0 21 16" fill="none" stroke="#fff" strokeWidth="3">
            <circle cx="6" cy="7" r="4.3" />
            <path d="M10.5 2v7c0 2 1 3 3 3M20 6.5c-5-2-6 6-.5 7.5" />
            <circle cx="16" cy="2" r="1.8" fill="#d23c3c" stroke="none" />
          </svg>
          AiCoin
        </Brand>
        <AxisTools>
          <button>筹</button>
          <button>爆</button>
        </AxisTools>
      </ChartArea>

      <BottomBar>
        <RangeButton $width={102}><Icon name="calendar" />定位到...</RangeButton>
        <Divider $height={29} />
        <RangeButton $width={102}>日期范围<Icon name="down" size={5} /></RangeButton>
        <Divider $height={29} $after={11} />
        <Group $gap={12}>
          {['BOLL', 'MA', 'EMA', 'TD', '筹码分布', '大额成交'].map(t => <Tab key={t} $height={22}>{t}</Tab>)}
        </Group>
        <Divider $height={29} $before={25} $after={10} />
        <Group $gap={12}>
          {['Volume', '持仓量 (OI)', 'MACD', 'KDJ', 'RSI', '爆仓统计', 'LSUR', 'FR'].map(t => (
            <Tab key={t} $height={22} $active={['Volume', 'MACD', 'RSI'].includes(t)}>{t}</Tab>
          ))}
        </Group>
        <RangeButton $width={120}><Icon name="editBox" size={13} />社区指标</RangeButton>
        <AxisMode>
          <button>对数</button>
          <button>%</button>
          <button>自动</button>
        </AxisMode>
      </BottomBar>
    </Main>

    <RightBar>
      <Rail $top={16}>
        <RailButton aria-label="资讯"><Icon name="doc" size={18} /></RailButton>
        <RailButton aria-label="账单"><Icon name="bill" size={18} /></RailButton>
        <RailButton aria-label="涨势"><Icon name="growth" size={18} /></RailButton>
        <RailButton aria-label="看板"><Icon name="board" size={18} /></RailButton>
        <RailButton><EtfBadge>ETF</EtfBadge></RailButton>
        <RailButton aria-label="合约"><Icon name="hexTrade" size={20} /></RailButton>
        <RailLine />
        <RailButton aria-label="兑换"><Icon name="swap" size={18} /></RailButton>
      </Rail>
      <Rail>
        <RailButton aria-label="布局"><Icon name="layout" size={18} /></RailButton>
        <RailButton aria-label="客服"><Icon name="headset" size={18} /></RailButton>
        <Avatar viewBox="0 0 24 12">
          <path d="M1 1l5 3h12l5-3v11H1z" fill="#e8e8f0" />
          <rect x="5" y="5" width="14" height="14" rx="6" fill="#16162c" stroke="#7a55e0" strokeWidth="2" />
          <circle cx="9" cy="9" r="1.5" fill="#fff" />
          <circle cx="15" cy="9" r="1.5" fill="#fff" />
        </Avatar>
      </Rail>
    </RightBar>

    <Handle $side="left" aria-label="展开左栏"><svg width="4" height="8"><path d="M0 0l4 4-4 4z" fill="currentColor" /></svg></Handle>
    <Handle $side="right" aria-label="展开右栏"><svg width="4" height="8"><path d="M4 0L0 4l4 4z" fill="currentColor" /></svg></Handle>
    <Handle $side="bottom" aria-label="展开底栏"><svg width="8" height="4"><path d="M0 4l4-4 4 4z" fill="currentColor" /></svg></Handle>

    <Marks viewBox="0 0 1920 862">
      <path d="M1095 246h7v45h-2v45h-2v-45h-3zM1095 584h7v80h-7z" fill="#ff3636" />
      <path d="M1104 245h7v92h-7zM1105 584h7v81h-7z" fill="#32832d" />
      <g fill="none" stroke="#fff" strokeWidth="2.5">
        <ellipse cx="1104.5" cy="292" rx="22.5" ry="72.5" />
        <ellipse cx="1104.5" cy="625.5" rx="22" ry="68.5" />
        <ellipse cx="1840" cy="270" rx="63.5" ry="116" />
      </g>
      <path d="M1716 188.5l60-5.5v-6l23 11-22 11v-6z" fill="#ff3636" />
      <path d="M1714 235.5l71-4v-6l23 11-23 11v-6z" fill="#fffb12" />
    </Marks>

    <Signature>
      <svg width="27" height="27" viewBox="0 0 27 27" fill="#e4e4e4">
        <path d="M13.5 0l8 8-3 3-5-5-5 5-3-3zM13.500 27l-8-8 3-3 5 5 5-5 3 3zM13.500 10.500l3 3-3 3-3-3zM3 10.500l3 3-3 3-3-3zM24 10.500l3 3-3 3-3-3z" />
      </svg>
      @ 张同学121
    </Signature>
  </Page>
);

export default App;
